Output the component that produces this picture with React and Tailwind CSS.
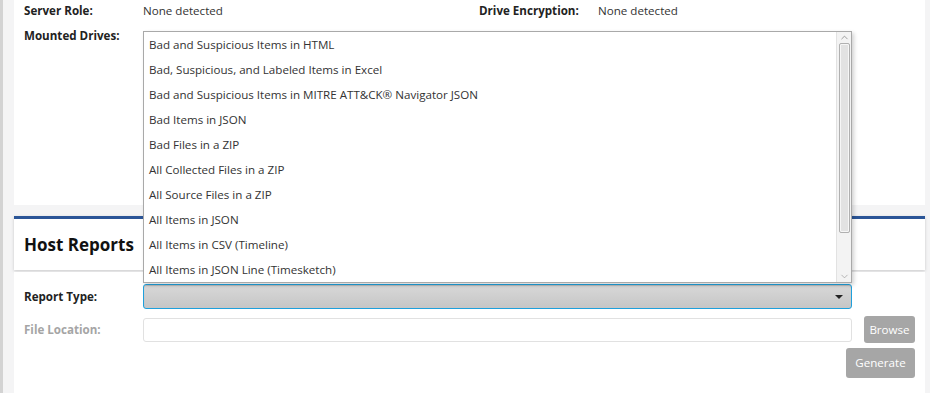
import { ChevronUp, ChevronDown } from 'lucide-react'

const reportTypes = [
  'Bad and Suspicious Items in HTML',
  'Bad, Suspicious, and Labeled Items in Excel',
  'Bad and Suspicious Items in MITRE ATT&CK® Navigator JSON',
  'Bad Items in JSON',
  'Bad Files in a ZIP',
  'All Collected Files in a ZIP',
  'All Source Files in a ZIP',
  'All Items in JSON',
  'All Items in CSV (Timeline)',
  'All Items in JSON Line (Timesketch)',
]

function ReportList() {
  return (
    <div className="absolute left-0 right-0 bottom-full mb-[1px] h-[252px] flex bg-white border border-[#a9a9a9] shadow-[2px_2px_4px_rgba(0,0,0,0.18)] z-20">
      <div className="flex-1 overflow-hidden">
        {reportTypes.map((t) => (
          <div key={t} className="h-[25px] leading-[25px] pl-[5px] text-[11.6px] text-[#333] whitespace-nowrap">
            {t}
          </div>
        ))}
      </div>
      {/* scrollbar */}
      <div className="w-[15px] flex flex-col items-center bg-[#f3f3f3] border-l border-[#e2e2e2]">
        <div className="h-[11px] flex items-center justify-center text-[#777]">
          <ChevronUp size={11} strokeWidth={1.5} />
        </div>
        <div className="w-[11px] h-[190px] rounded-[2px] border border-[#b0b0b0] bg-[#e2e2e2] shadow-[inset_0_0_0_1px_#f6f6f6]" />
        <div className="flex-1" />
        <div className="h-[12px] flex items-center justify-center text-[#999]">
          <ChevronDown size={11} strokeWidth={1.5} />
        </div>
      </div>
    </div>
  )
}

export default function App() {
  return (
    <div className="w-[930px] h-[393px] overflow-hidden flex bg-[#f4f4f5] text-[#222]" style={{ fontFamily: '"Open Sans", "Noto Sans", sans-serif' }}>
      <div className="w-[3px] bg-[#d3d3d3]" />
      <div className="w-[11px]" />

      <div className="w-[911px] flex flex-col">
        {/* Host details */}
        <div className="h-[205px] bg-white pl-[10px] pt-[2px] text-[11.6px]">
          <div className="grid grid-cols-[119px_336px_119px_1fr] h-[17px] leading-[17px]">
            <span className="font-bold">Server Role:</span>
            <span className="text-[#333]">None detected</span>
            <span className="font-bold">Drive Encryption:</span>
            <span className="text-[#333]">None detected</span>
          </div>
          <div className="grid grid-cols-[119px_1fr] mt-[8px] h-[17px] leading-[17px]">
            <span className="font-bold">Mounted Drives:</span>
            <span />
          </div>
        </div>

        {/* Host Reports header */}
        <div className="mt-[11px] h-[54px] bg-white border-t-[3px] border-[#2b5597] shadow-[0_1px_3px_rgba(0,0,0,0.18)] pl-[10px] flex items-center">
          <h2 className="text-[17px] font-bold text-[#111] leading-none">Host Reports</h2>
        </div>

        {/* Report form */}
        <div className="flex-1 mt-[2px] bg-white pl-[10px] pr-[10px] pt-[12px] text-[11.6px]">
          <div className="flex items-center h-[25px]">
            <span className="w-[119px] font-bold">Report Type:</span>
            <div className="relative w-[709px] h-[25px]">
              <ReportList />
              <div className="h-full rounded-[3px] border-[1.5px] border-[#1fa0dc] bg-gradient-to-b from-[#d8d8d8] to-[#c6c6c6] shadow-[inset_0_1px_1px_rgba(0,0,0,0.15)] flex items-center justify-end pr-[8px]">
                <span className="w-0 h-0 border-l-[4px] border-r-[4px] border-t-[4px] border-l-transparent border-r-transparent border-t-[#222]" />
              </div>
            </div>
          </div>

          <div className="flex items-center mt-[7px] h-[27px]">
            <span className="w-[119px] font-bold text-[#a5a5a5]">File Location:</span>
            <div className="w-[709px] h-[24px] rounded-[3px] border border-[#e1e1e1] bg-white" />
            <button className="ml-[12px] w-[51px] h-[27px] rounded-[3px] bg-[#a6a6a6] text-white text-[11.6px]">Browse</button>
          </div>

          <div className="flex justify-end mt-[5px]">
            <button className="w-[69px] h-[30px] rounded-[3px] bg-[#a6a6a6] text-white text-[11.6px]">Generate</button>
          </div>
        </div>
      </div>

      <div className="flex-1" />
    </div>
  )
}
